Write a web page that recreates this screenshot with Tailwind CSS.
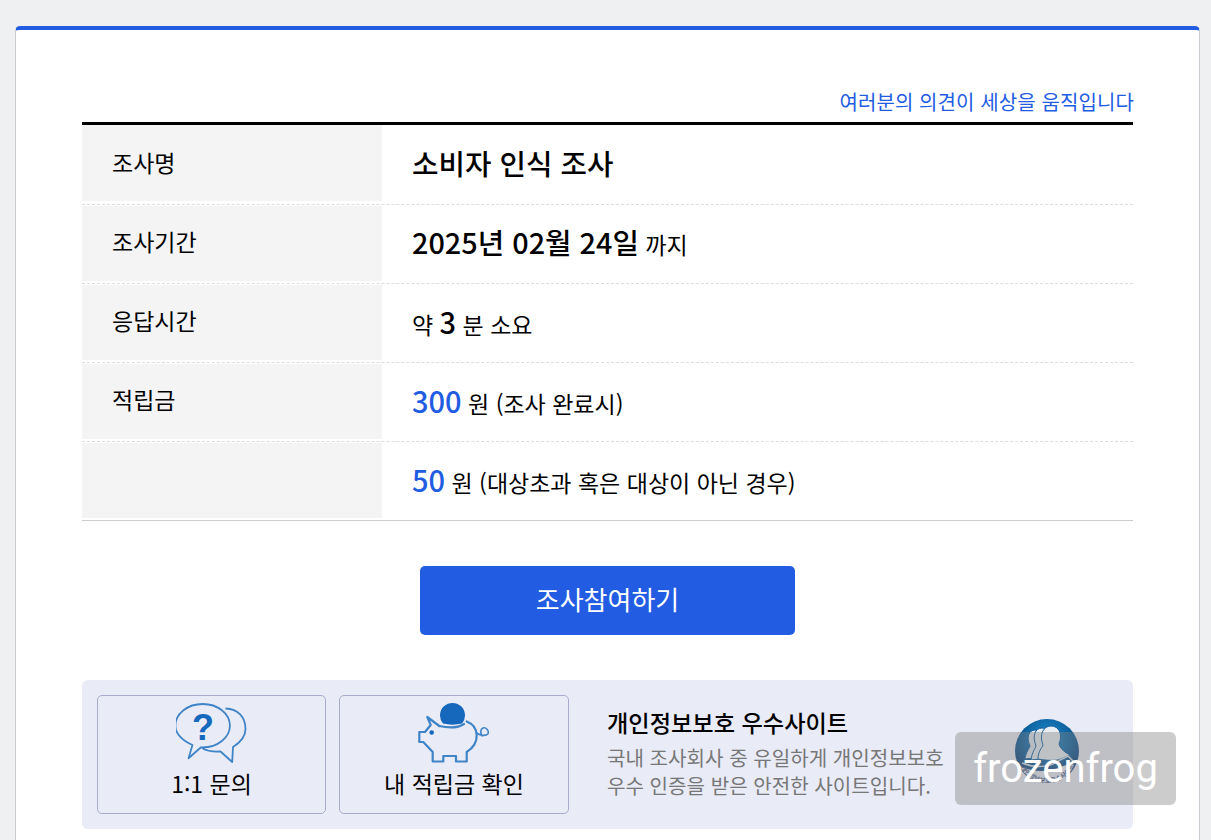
<!DOCTYPE html>
<html lang="ko">
<head>
<meta charset="utf-8">
<script src="https://cdn.jsdelivr.net/npm/@tailwindcss/browser@4"></script>
</head>
<body class="m-0 h-[840px] overflow-hidden bg-[#eff0f2] font-['Noto_Sans_CJK_KR','Noto_Sans',sans-serif] text-black">
<div class="relative h-[840px] pt-[26px] pl-[15px] pr-[11px]">
    <!-- card -->
    <div class="h-[830px] bg-white border-x border-[#c9ccd1] border-t-[4px] border-t-[#225ce2] rounded-t-[5px] pl-[66px] pr-[66px] pt-[55px]">
        <p class="h-[37px] text-right text-[20px] leading-[34px] tracking-[0.1px] text-[#225ce2] -mr-px whitespace-nowrap">여러분의 의견이 세상을 움직입니다</p>

        <div class="border-t-[3px] border-black border-b border-b-[#cccccc]">
            <div class="flex h-[80px] border-b border-dashed border-[#dddddd]">
                <div class="w-[300px] h-[76px] bg-[#f4f4f4] pl-[30px] text-[23px] leading-[74px]">조사명</div>
                <div class="pl-[30px] text-[28.8px] leading-[76px] font-medium">소비자 인식 조사</div>
            </div>
            <div class="flex h-[79px] border-b border-dashed border-[#dddddd]">
                <div class="w-[300px] h-[75px] mt-px bg-[#f4f4f4] pl-[30px] text-[23px] leading-[70px]">조사기간</div>
                <div class="pl-[30px] leading-[74px] text-[23px]"><span class="text-[28.8px] font-medium">2025년 02월 24일</span> 까지</div>
            </div>
            <div class="flex h-[79px] border-b border-dashed border-[#dddddd]">
                <div class="w-[300px] h-[75px] mt-px bg-[#f4f4f4] pl-[30px] text-[23px] leading-[70px]">응답시간</div>
                <div class="pl-[30px] leading-[74px] text-[23px]">약 <span class="text-[29px] font-medium">3</span> 분 소요</div>
            </div>
            <div class="flex h-[79px] border-b border-dashed border-[#dddddd]">
                <div class="w-[300px] h-[75px] mt-px bg-[#f4f4f4] pl-[30px] text-[23px] leading-[70px]">적립금</div>
                <div class="pl-[30px] leading-[74px] text-[23px]"><span class="text-[29px] font-medium text-[#225ce2]">300</span> 원 (조사 완료시)</div>
            </div>
            <div class="flex h-[78px]">
                <div class="w-[300px] h-[75px] mt-px bg-[#f4f4f4]"></div>
                <div class="pl-[30px] leading-[74px] text-[23px]"><span class="text-[29px] font-medium text-[#225ce2]">50</span> 원 (대상초과 혹은 대상이 아닌 경우)</div>
            </div>
        </div>

        <div class="flex justify-center mt-[45px]">
            <button class="w-[375px] h-[69px] rounded-[5px] bg-[#225ce2] text-white text-[26px] pb-[4px]">조사참여하기</button>
        </div>

        <div class="flex items-center mt-[45px] h-[149px] rounded-[6px] bg-[#e9ebf6] pl-[15px]">
            <div class="w-[229px] h-[119px] shrink-0 flex flex-col items-center rounded-[5px] border border-[#a9abcc] pt-[6px]">
                <svg width="72" height="62" viewBox="0 0 72 62" fill="none" stroke="#3f84c6" stroke-width="1.8" stroke-linejoin="round">
                    <path d="M49.500 6.500C62 7 69.500 15 69.500 27C69.500 34 65 40 57 45L56.200 60L44.500 49.500C38 50 31 49 26 46"/>
                    <path d="M27.200 2C42.500 2 55 11.500 55 23.700C55 35.500 42.500 45.400 27.200 45.400C26.500 45.400 26 45.300 25.500 45.300L12.800 56.300L16.800 43C7 39 -0.600 32 -0.600 23.700C-0.600 11.500 12 2 27.200 2Z" fill="#e9ebf6" transform="translate(0 0) scale(0.98 1)"/>
                    <text x="27" y="38" text-anchor="middle" font-family="'Liberation Sans',sans-serif" font-weight="700" font-size="36" fill="#1668bd" stroke="none">?</text>
                </svg>
                <div class="mt-[2px] text-[23px] leading-[34px]">1:1 문의</div>
            </div>
            <div class="w-[230px] h-[119px] shrink-0 ml-[13px] flex flex-col items-center rounded-[5px] border border-[#a9abcc] pt-[6px]">
                <svg width="72" height="62" viewBox="0 0 72 62" fill="none" stroke="#3f84c6" stroke-width="2.200" stroke-linejoin="round" stroke-linecap="round">
                    <path d="M25 21.500A12.500 12.500 0 1 1 44 21.500C38 23 31 23 25 21.500Z" fill="#1668bd" stroke="none"/>
                    <path d="M21.300 24C30 26 40 26 46 22"/>
                    <path d="M21.300 24L9.300 15L12.700 23L7 30H1.300V40H5.300L14.700 50V59.500H25.300V54H38V59.500H48.700V50C55 46 59 40 58.700 33C58.500 27 55 22 48.700 19.500"/>
                    <path d="M58.500 31C63 34 68 34 69.800 32C71.500 29 68 25 65 26C62 27 62.500 31 64 34" stroke-width="1.600"/>
                    <circle cx="13.700" cy="30.500" r="2.300" fill="#1668bd" stroke="none"/>
                </svg>
                <div class="mt-[2px] text-[23px] leading-[34px]">내 적립금 확인</div>
            </div>
            <div class="ml-[38px] w-[360px] -mt-[3px]">
                <div class="text-[23.200px] leading-[30px] font-medium whitespace-nowrap">개인정보보호 우수사이트</div>
                <div class="mt-[7px] text-[20.100px] leading-[28px] text-[#777777] whitespace-nowrap">국내 조사회사 중 유일하게 개인정보보호<br>우수 인증을 받은 안전한 사이트입니다.</div>
            </div>
            <!-- 인증 마크 -->
            <svg class="shrink-0 ml-[47px] -mt-[1px]" width="68" height="70" viewBox="0 0 68 70">
                <defs>
                    <radialGradient id="seal" cx="0.5" cy="0.3" r="0.7">
                        <stop offset="0" stop-color="#1a8fd0"/>
                        <stop offset="1" stop-color="#04356f"/>
                    </radialGradient>
                </defs>
                <circle cx="33" cy="32" r="32" fill="url(#seal)"/>
                <path d="M6 47C16 52 28 53 36 51C46 49 54 44 60 46C54 60 44 66 33 66C21 66 11 58 6 47Z" fill="#e9ebf6"/>
                <path d="M11 40C12 33 15 30 16 27C12 18 15 11 21 11C25 11 28 15 27 21C28 30 34 33 38 37Z" fill="#dde5ee" stroke="#0d5c9e" stroke-width="1"/>
                <path d="M17 41C18 33 21 30 22 27C18 17 21 9 28 9C33 9 36 14 34 22C35 30 41 33 45 38Z" fill="#e2e9f0" stroke="#0d5c9e" stroke-width="1"/>
                <path d="M24 40C24 32 28 29 29 26C25 16 29 7 37 7C45 7 49 15 45 25C46 30 52 34 56 36L44 41C37 42 30 41 24 40Z" fill="#e8eef3" stroke="#0d5c9e" stroke-width="1"/>
                <path d="M8 44C20 49 36 49 46 41L54 37L60 43" fill="none" stroke="#d6e1ea" stroke-width="1.500"/>
                <path id="ring" d="M5 46A31 31 0 0 0 62 44" fill="none"/>
                <text font-size="6.500" font-weight="700" fill="#41598a"><textPath href="#ring" startOffset="4%">개인정보보호우수사이트</textPath></text>
            </svg>
        </div>
    </div>

    <!-- watermark -->
    <div class="absolute left-[955px] top-[732px] w-[221px] h-[73px] rounded-[6px] bg-[#808080]/40 text-center text-white font-['Roboto',sans-serif] text-[40px] leading-[73px]">frozenfrog</div>
</div>
</body>
</html>
